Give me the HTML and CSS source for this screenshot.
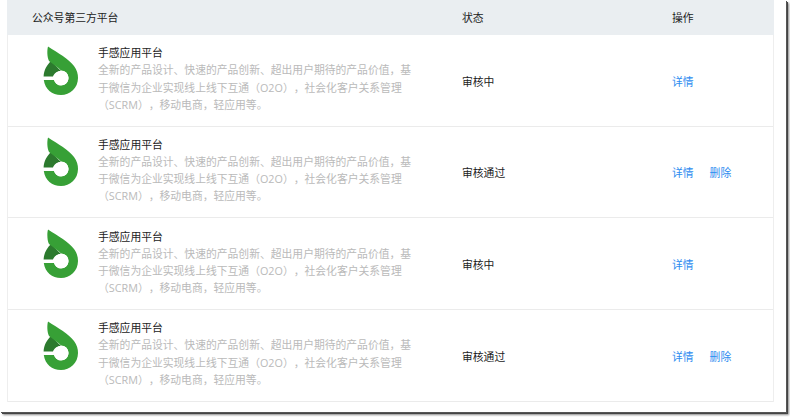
FILE: index.html
```html
<!DOCTYPE html>
<html lang="zh-CN">
<head>
<meta charset="utf-8">
<title>公众号第三方平台</title>
<link rel="stylesheet" href="styles.css">
</head>
<body>
<svg class="defs" aria-hidden="true">
  <symbol id="logo" viewBox="0 0 36 50">
    <path fill="#2c7a2e" d="M8 15C4 19 .8 24 .6 30.500H10C11 28 13 25.500 18 25Z"/>
    <path fill="#37a036" d="M5 0.500C15 7 26 13 31 20C34 24 35 28 35 32C35 42 27 49 18 49C9 49 2 43 .8 34H11C12 37.500 15 39.500 18 39.500C22 39.500 25.500 36 25.500 32C25.500 27.500 22 24.500 18 24.500C15.500 21.500 11 19 6 15C4 11 4 4 5 .5Z"/>
    <path fill="#fff" d="M0 31.200H11V33.300H0Z"/>
    <circle cx="18.200" cy="32" r="7.300" fill="#fff"/>
  </symbol>
</svg>
<div class="window">
  <div class="table">
    <div class="head">
      <div class="app">公众号第三方平台</div>
      <div class="status">状态</div>
      <div class="actions">操作</div>
    </div>
    <div class="row">
      <div class="app">
        <svg class="logo"><use href="#logo"/></svg>
        <div class="info">
          <div class="name">手感应用平台</div>
          <div class="desc">全新的产品设计、快速的产品创新、超出用户期待的产品价值，基<br>于微信为企业实现线上线下互通（O2O），社会化客户关系管理<br>（SCRM），移动电商，轻应用等。</div>
        </div>
      </div>
      <div class="status">审核中</div>
      <div class="actions"><a>详情</a></div>
    </div>
    <div class="row">
      <div class="app">
        <svg class="logo"><use href="#logo"/></svg>
        <div class="info">
          <div class="name">手感应用平台</div>
          <div class="desc">全新的产品设计、快速的产品创新、超出用户期待的产品价值，基<br>于微信为企业实现线上线下互通（O2O），社会化客户关系管理<br>（SCRM），移动电商，轻应用等。</div>
        </div>
      </div>
      <div class="status">审核通过</div>
      <div class="actions"><a>详情</a><a>删除</a></div>
    </div>
    <div class="row">
      <div class="app">
        <svg class="logo"><use href="#logo"/></svg>
        <div class="info">
          <div class="name">手感应用平台</div>
          <div class="desc">全新的产品设计、快速的产品创新、超出用户期待的产品价值，基<br>于微信为企业实现线上线下互通（O2O），社会化客户关系管理<br>（SCRM），移动电商，轻应用等。</div>
        </div>
      </div>
      <div class="status">审核中</div>
      <div class="actions"><a>详情</a></div>
    </div>
    <div class="row">
      <div class="app">
        <svg class="logo"><use href="#logo"/></svg>
        <div class="info">
          <div class="name">手感应用平台</div>
          <div class="desc">全新的产品设计、快速的产品创新、超出用户期待的产品价值，基<br>于微信为企业实现线上线下互通（O2O），社会化客户关系管理<br>（SCRM），移动电商，轻应用等。</div>
        </div>
      </div>
      <div class="status">审核通过</div>
      <div class="actions"><a>详情</a><a>删除</a></div>
    </div>
  </div>
</div>
</body>
</html>
```
FILE: styles.css
```css
* {
  box-sizing: border-box;
}

body {
  margin: 0;
  height: 417px;
  overflow: hidden;
  background: #fff;
  color: #222;
  font: 10.8px/17.2px "Open Sans", "Noto Sans CJK SC", sans-serif;
  text-spacing-trim: space-all;
}

.defs {
  position: absolute;
  width: 0;
  height: 0;
}

.window {
  width: 786px;
  height: 412px;
  padding-left: 7px;
  background: #fff;
  box-shadow: 1px 1px 0 #555, 2px 2px 0 #444, 3px 3px 2px #888;
}

.table {
  width: 767px;
  border: solid #eee;
  border-width: 0 1px;
}

.head,
.row {
  display: grid;
  grid-template-columns: 454px 210px 1fr;
  align-items: center;
  white-space: nowrap;
}

.head {
  height: 35px;
  background: #eaeef1;
  margin: 0 -1px;
  padding: 0 1px;
}

.head .app {
  padding-left: 24px;
}

.row {
  height: 91.67px;
  border-bottom: 1px solid #ebebeb;
}

.row .app {
  display: flex;
  align-self: start;
  padding: 9.4px 0 0 35px;
}

.row .status,
.row .actions {
  padding-top: 2px;
}

.logo {
  flex: none;
  width: 36px;
  height: 50px;
  margin-top: 1.4px;
}

.info {
  margin-left: 19px;
}

.name {
  height: 17px;
}

.desc {
  color: #bababa;
}

.actions {
  display: flex;
  gap: 16px;
}

.actions a {
  color: #2d8cf0;
}
```
